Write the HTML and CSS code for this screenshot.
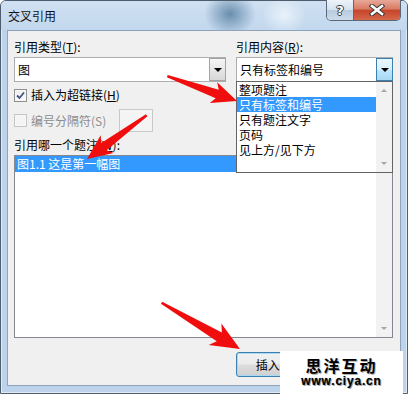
FILE: index.html
```html
<!DOCTYPE html>
<html>
	<head>
		<meta charset="UTF-8">
		<title>交叉引用</title>
		<link rel="stylesheet" href="styles.css">
	</head>
	<body>

		<!-- 对话框窗口 -->
		<div class="window">

			<!-- 标题栏 -->
			<div class="titlebar">
				<span class="title">交叉引用</span>
				<div class="caption">
					<span class="cap-btn help">?</span>
					<span class="cap-btn close">
						<svg width="16" height="12" viewBox="0 0 16 12">
							<path d="M3 2 L13 10 M13 2 L3 10" stroke="#3b3b3b" stroke-width="4.6" stroke-linecap="square"/>
							<path d="M3 2 L13 10 M13 2 L3 10" stroke="#ffffff" stroke-width="2.6" stroke-linecap="square"/>
						</svg>
					</span>
				</div>
			</div>

			<!-- 客户区 -->
			<div class="client">

				<div class="top-row">
					<div class="field">
						<div class="label">引用类型(<u>T</u>):</div>
						<div class="combo">
							<span class="combo-text">图</span>
							<span class="combo-btn"><i class="tri"></i></span>
						</div>
					</div>
					<div class="field">
						<div class="label">引用内容(<u>R</u>):</div>
						<div class="combo open">
							<span class="combo-text">只有标签和编号</span>
							<span class="combo-btn"><i class="tri"></i></span>

							<!-- 展开的下拉列表 -->
							<div class="droplist">
								<ul class="items">
									<li>整项题注</li>
									<li class="sel">只有标签和编号</li>
									<li>只有题注文字</li>
									<li>页码</li>
									<li>见上方/见下方</li>
								</ul>
								<div class="vscroll">
									<span class="sb-arrow"><i class="up"></i></span>
									<span class="sb-arrow"><i class="down"></i></span>
								</div>
							</div>
						</div>
					</div>
				</div>

				<div class="check-row">
					<span class="check checked">
						<svg width="11" height="11" viewBox="0 0 11 11">
							<path d="M2 5.5 L4.5 8 L9 2.5" fill="none" stroke="#3d5286" stroke-width="1.8"/>
						</svg>
					</span>
					<span>插入为超链接(<u>H</u>)</span>
				</div>

				<div class="check-row disabled">
					<span class="check"></span>
					<span>编号分隔符(S)</span>
					<span class="sep-box"></span>
				</div>

				<div class="label">引用哪一个题注(<u>W</u>):</div>
				<div class="listbox">
					<ul class="items">
						<li class="sel">图1.1 这是第一幅图</li>
					</ul>
					<div class="vscroll">
						<span class="sb-arrow"><i class="up"></i></span>
						<span class="sb-arrow"><i class="down"></i></span>
					</div>
				</div>

				<div class="buttons">
					<button class="btn default">插入(<u>I</u>)</button>
					<button class="btn">取消</button>
				</div>
			</div>
		</div>

		<!-- 红色标注箭头 -->
		<svg class="arrows" width="408" height="394" viewBox="0 0 408 394">
			<polygon transform="translate(237,101) rotate(19.65)" points="-74,-1.2 -21,-4.5 -25,-11 0,0 -25,11 -21,4.5 -74,1.2" fill="#f00d0d"/>
			<polygon transform="translate(87,159) rotate(143.75)" points="-74,-1.2 -21,-4.5 -25,-11 0,0 -25,11 -21,4.5 -74,1.2" fill="#f00d0d"/>
			<polygon transform="translate(240,349) rotate(30.5)" points="-91,-1.2 -24,-5 -29,-12.5 0,0 -29,12.5 -24,5 -91,1.2" fill="#f00d0d"/>
		</svg>

		<!-- 水印 -->
		<div class="watermark">
			<div class="wm-cn">思洋互动</div>
			<div class="wm-url">www.ciya.cn</div>
		</div>

	</body>
</html>
```

FILE: styles.css
```css
*{
	margin: 0;
	padding: 0;
}

body{
	width: 408px;
	height: 394px;
	overflow: hidden;
	position: relative;
	font-family: "Noto Sans CJK SC", "Liberation Sans", sans-serif;
	font-size: 12px;
	color: #000;
}

ul{
	list-style: none;
}

/*窗口外框*/
.window{
	height: 394px;
	box-sizing: border-box;
	border: 1px solid #4d5d6e;
	border-radius: 6px 6px 0 0;
	background-color: #bcd3eb;
	box-shadow: inset 0 0 0 1px rgba(255,255,255,0.55);
	display: flex;
	flex-direction: column;
}

/*标题栏*/
.titlebar{
	height: 29px;
	display: flex;
	align-items: center;
	border-radius: 5px 5px 0 0;
	background:
		radial-gradient(ellipse 26px 22px at 229px 13px, rgba(88,128,162,0.85), rgba(88,128,162,0) 100%),
		radial-gradient(ellipse 22px 20px at 283px 14px, rgba(236,244,251,0.9), rgba(236,244,251,0) 100%),
		linear-gradient(180deg, #cfe0f1 0%, #c3d8ee 100%);
}

.title{
	padding-left: 7px;
	font-size: 12px;
	line-height: 16px;
	color: #111;
	flex: 1;
}

.caption{
	align-self: flex-start;
	margin-right: 6px;
	margin-top: -1px;
	display: flex;
	height: 20px;
	border: 1px solid #5a6878;
	border-top: none;
	border-radius: 0 0 5px 5px;
	overflow: hidden;
}

.cap-btn{
	display: flex;
	align-items: center;
	justify-content: center;
	height: 100%;
}

.help{
	width: 26px;
	border-right: 1px solid #5a6878;
	background: linear-gradient(180deg, #eef3f9 0%, #d6e2ee 48%, #b8cbde 52%, #cbdbeb 100%);
	font-family: "DejaVu Sans", sans-serif;
	font-weight: bold;
	font-size: 13px;
	color: #fff;
	text-shadow: 1px 0 0 #2d3946, -1px 0 0 #2d3946, 0 1px 0 #2d3946, 0 -1px 0 #2d3946;
}

.close{
	width: 46px;
	background: linear-gradient(180deg, #e8a898 0%, #d97a63 45%, #c6452c 52%, #d5674a 100%);
}

/*客户区*/
.client{
	height: 356px;
	margin: 0 6px;
	box-sizing: border-box;
	border: 1px solid #8fa3bb;
	background-color: #f0f0f0;
	padding: 8px 7px 0 6px;
	display: flex;
	flex-direction: column;
}

.top-row{
	display: grid;
	grid-template-columns: 212px 157px;
	column-gap: 10px;
}

.label{
	height: 16px;
	line-height: 16px;
	margin-bottom: 2px;
}

/*组合框*/
.combo{
	position: relative;
	height: 25px;
	box-sizing: border-box;
	border: 1px solid #abadb3;
	background-color: #fff;
	display: flex;
	align-items: center;
}

.combo-text{
	flex: 1;
	padding-left: 3px;
	line-height: 16px;
}

.combo-btn{
	align-self: stretch;
	width: 17px;
	box-sizing: border-box;
	border: 1px solid #a3a3a3;
	margin: 0 -1px 0 0;
	background: linear-gradient(180deg, #f6f6f6 0%, #e6e6e6 50%, #d8d8d8 100%);
	display: flex;
	align-items: center;
	justify-content: center;
}

.open .combo-btn{
	border-color: #3c7fb1;
	background: linear-gradient(180deg, #eaf6fd 0%, #d9f0fc 50%, #bee6fd 52%, #a7d9f5 100%);
}

.tri{
	width: 0;
	height: 0;
	border-left: 4px solid transparent;
	border-right: 4px solid transparent;
	border-top: 4px solid #000;
}

/*下拉列表*/
.droplist{
	position: absolute;
	top: 23px;
	left: -1px;
	right: -1px;
	height: 92px;
	box-sizing: border-box;
	border: 1px solid #646464;
	background-color: #fff;
	display: flex;
	z-index: 2;
}

.items{
	flex: 1;
}

.droplist li{
	height: 15px;
	line-height: 15px;
	padding-left: 2px;
}

.sel{
	background-color: #3399ff;
	color: #fff;
}

/*滚动条*/
.vscroll{
	width: 16px;
	background-color: #f2f2f2;
	display: flex;
	flex-direction: column;
	justify-content: space-between;
}

.sb-arrow{
	height: 17px;
	display: flex;
	align-items: center;
	justify-content: center;
}

.up{
	border-left: 3px solid transparent;
	border-right: 3px solid transparent;
	border-bottom: 3px solid #a6a6a6;
}

.down{
	border-left: 3px solid transparent;
	border-right: 3px solid transparent;
	border-top: 3px solid #a6a6a6;
}

/*复选框*/
.check-row{
	display: flex;
	align-items: center;
	height: 16px;
	margin-top: 5px;
	line-height: 16px;
}

.check-row.disabled{
	height: 23px;
	margin-top: 6px;
	margin-bottom: 5px;
	color: #8d8d8d;
}

.check{
	width: 13px;
	height: 13px;
	box-sizing: border-box;
	border: 1px solid #8e8f8f;
	background: linear-gradient(180deg, #eeeeee, #fbfbfb);
	box-shadow: inset 0 0 0 1px #f8f8f8;
	margin-right: 4px;
	display: flex;
	align-items: center;
	justify-content: center;
}

.disabled .check{
	border-color: #c5c5c5;
	background: #f4f4f4;
}

.sep-box{
	width: 34px;
	height: 23px;
	box-sizing: border-box;
	border: 1px solid #c9c9c9;
	background-color: #f4f4f4;
	margin-left: 13px;
}

/*列表框*/
.listbox{
	height: 183px;
	box-sizing: border-box;
	border: 1px solid #828790;
	background-color: #fff;
	display: flex;
}

.listbox li{
	height: 16px;
	line-height: 16px;
	padding-left: 2px;
}

/*按钮*/
.buttons{
	display: flex;
	justify-content: flex-end;
	gap: 7px;
	margin-top: 14px;
}

.btn{
	width: 75px;
	height: 25px;
	box-sizing: border-box;
	border: 1px solid #707070;
	border-radius: 3px;
	background: linear-gradient(180deg, #f2f2f2 0%, #ebebeb 48%, #dddddd 52%, #cfcfcf 100%);
	font-family: "Noto Sans CJK SC", "Liberation Sans", sans-serif;
	font-size: 12px;
	color: #000;
}

.btn.default{
	border-color: #3c7fb1;
	box-shadow: inset 0 0 0 1px #a8d8f4;
}

/*箭头覆盖层*/
.arrows{
	position: absolute;
	left: 0;
	top: 0;
	pointer-events: none;
	z-index: 5;
}

/*水印*/
.watermark{
	position: absolute;
	left: 280px;
	top: 351px;
	width: 123px;
	height: 43px;
	background-color: #fff;
	text-align: center;
	z-index: 6;
}

.wm-cn{
	margin-top: 4px;
	font-size: 16px;
	line-height: 20px;
	font-weight: bold;
	letter-spacing: 2px;
	text-shadow: 1px 1px 0 #b0b0b0;
}

.wm-url{
	font-family: "Liberation Sans", sans-serif;
	font-weight: bold;
	font-size: 12px;
	line-height: 13px;
	letter-spacing: 0.8px;
	text-shadow: 0 0 1px #777, 1px 1px 0 #aaa;
}
```
